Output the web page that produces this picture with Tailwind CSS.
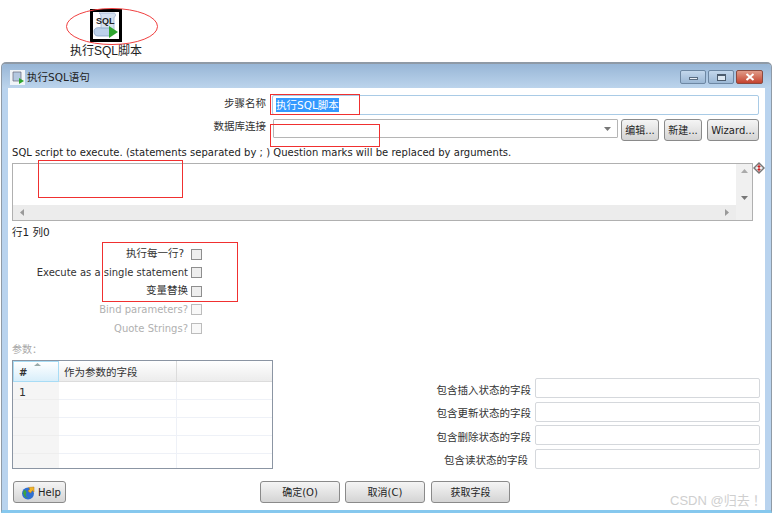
<!DOCTYPE html>
<html lang="zh-CN">
<head>
    <meta charset="UTF-8">
    <title>执行SQL语句</title>
    <script src="https://cdn.jsdelivr.net/npm/@tailwindcss/browser@4"></script>
</head>
<body class="bg-white font-['DejaVu_Sans','Noto_Sans_CJK_SC',sans-serif] text-[10px] text-[#333]">
<div class="relative w-[774px] h-[513px] overflow-hidden bg-white">

    <!-- Step icon on canvas -->
    <div class="h-[62px] w-[212px] flex flex-col items-center pt-[9px]">
        <div class="w-[32px] h-[33px] border-[3px] border-black bg-white relative overflow-hidden">
            <svg width="26" height="27" viewBox="0 0 26 27" class="absolute left-0 top-0">
                <path d="M6 1h15c2 0 2 4 0 4v14H8V5C8 3 7 1 6 1z" fill="#d5e1f0" stroke="#9db3cf" stroke-width="0.8"/>
                <path d="M1 19c0-3 4-4 7-3h9v8H5c-3 0-4-2-4-5z" fill="#bcd1ea" stroke="#86a2c6" stroke-width="0.8"/>
                <path d="M16 14l9 6-9 6z" fill="#2ea52e"/>
            </svg>
            <span class="absolute left-[3px] top-[4px] text-[9px] leading-[10px] font-bold text-[#222] font-['Liberation_Sans',sans-serif]">SQL</span>
        </div>
        <span class="text-[12px] leading-[18px] text-[#222] font-['Liberation_Sans','Noto_Sans_CJK_SC',sans-serif]">执行SQL脚本</span>
    </div>

    <!-- Window -->
    <div class="ml-[1px] w-[771px] h-[451px] rounded-t-[5px] border-t-2 border-x border-b-[3px] border-t-[#8f9aa6] border-x-[#8f9aa6] border-b-[#86c8ee] bg-[#b9d3ee] flex flex-col">
        <!-- Title bar -->
        <div class="h-[24px] shrink-0 flex items-center pl-[8px] pr-[8px] pt-[2px] bg-gradient-to-b from-[#98b6d6] to-[#bcd4ec] rounded-t-[4px]">
            <svg width="15" height="15" viewBox="0 0 15 15" class="mr-[2px]">
                <rect width="15" height="15" fill="#f0f4f8"/>
                <path d="M3 2h8v9H3z" fill="#b4c8e0" stroke="#667" stroke-width="0.7"/>
                <path d="M9 8l5 3-5 3z" fill="#2ea52e"/>
            </svg>
            <span class="text-[10.5px] text-[#222] pt-[1px]">执行SQL语句</span>
            <div class="ml-auto flex gap-[2px]">
                <div class="w-[26px] h-[14px] rounded-[2px] border border-[#6d87a3] bg-gradient-to-b from-[#c3d7ec] to-[#9cb8d5] flex items-center justify-center pt-[3px]"><div class="w-[9px] h-[3px] bg-[#e8eef5] border border-[#5a6d82]"></div></div>
                <div class="w-[26px] h-[14px] rounded-[2px] border border-[#6d87a3] bg-gradient-to-b from-[#c3d7ec] to-[#9cb8d5] flex items-center justify-center"><div class="w-[9px] h-[7px] border border-[#4c5c6e] border-t-2 bg-[#dde8f2]"></div></div>
                <div class="w-[27px] h-[14px] rounded-[2px] border border-[#8a4a40] bg-gradient-to-b from-[#e09a88] to-[#c4412e] flex items-center justify-center">
                    <svg width="10" height="8" viewBox="0 0 10 8"><path d="M1.5 1l7 6M8.5 1l-7 6" stroke="#fff" stroke-width="2"/></svg>
                </div>
            </div>
        </div>

        <!-- Dialog body -->
        <div class="mx-[6px] flex-1 bg-white px-[4px] flex flex-col relative">
            <!-- Step name -->
            <div class="flex items-center h-[20px] mt-[7px]">
                <label class="w-[254px] pb-[2px] text-right text-[10.5px] text-[#333]">步骤名称</label>
                <div class="ml-[6px] w-[487px] h-[20px] border border-[#a9cbe6] rounded-[2px] flex items-center pl-[3px]">
                    <span class="bg-[#3399ff] text-white text-[10.5px] leading-[14px]">执行SQL脚本</span>
                </div>
            </div>
            <!-- Connection -->
            <div class="flex items-start h-[23px] mt-[4px]">
                <label class="w-[254px] text-right text-[10.5px] text-[#333]">数据库连接</label>
                <div class="ml-[7px] w-[345px] h-[19px] border border-[#b5b5b5] rounded-[1px] flex items-center justify-end pr-[6px]">
                    <svg width="7" height="4" viewBox="0 0 7 4"><path d="M0 0h7L3.5 4z" fill="#777"/></svg>
                </div>
                <button class="ml-[3px] w-[38px] h-[22px] border border-[#8a8a8a] rounded-[3px] bg-gradient-to-b from-[#f5f5f5] to-[#d4d4d4] text-[#222]">编辑...</button>
                <button class="ml-[5px] w-[38px] h-[22px] border border-[#8a8a8a] rounded-[3px] bg-gradient-to-b from-[#f5f5f5] to-[#d4d4d4] text-[#222]">新建...</button>
                <button class="ml-[5px] w-[52px] h-[22px] border border-[#8a8a8a] rounded-[3px] bg-gradient-to-b from-[#f5f5f5] to-[#d4d4d4] text-[#222]">Wizard...</button>
            </div>
            <!-- Script -->
            <p class="mt-[4px] h-[14px] leading-[14px] tracking-[0.03px] text-[#222] whitespace-nowrap">SQL script to execute. (statements separated by ; ) Question marks will be replaced by arguments.</p>
            <div class="mt-[3px] w-[741px] h-[58px] border border-[#b0b0b0] grid grid-cols-[1fr_16px] grid-rows-[1fr_15px]">
                <div></div>
                <div class="bg-[#f0f0f0] flex flex-col items-center justify-between py-[5px]">
                    <svg width="7" height="4" viewBox="0 0 7 4"><path d="M0 4h7L3.5 0z" fill="#aaa"/></svg>
                    <svg width="7" height="4" viewBox="0 0 7 4"><path d="M0 0h7L3.5 4z" fill="#777"/></svg>
                </div>
                <div class="bg-[#ececec] flex items-center justify-between px-[7px]">
                    <svg width="4" height="7" viewBox="0 0 4 7"><path d="M4 0v7L0 3.5z" fill="#999"/></svg>
                    <svg width="4" height="7" viewBox="0 0 4 7"><path d="M0 0v7l4-3.5z" fill="#999"/></svg>
                </div>
                <div class="bg-[#f0f0f0]"></div>
            </div>
            <!-- Variable marker -->
            <svg width="12" height="12" viewBox="0 0 12 12" class="absolute left-[745px] top-[74px]">
                <path d="M6 0l6 6-6 6-6-6z" fill="#777"/>
                <path d="M6 2l4 4-4 4-4-4z" fill="#eee"/>
                <path d="M6 2.5v7M4.5 4.5h3M4.5 7.5h3" stroke="#c81e1e" stroke-width="1.2"/>
            </svg>

            <p class="mt-[4px] h-[14px] leading-[14px] text-[10.5px] text-[#222]">行1 列0</p>

            <!-- Options -->
            <div class="mt-[9px] w-[190px] flex flex-col gap-[6.5px]">
                <div class="flex justify-end items-center h-[12px]"><span class="mr-[7px] text-[10.5px]">执行每一行?</span><span class="w-[11px] h-[11px] border border-[#8e8e8e] bg-[#eee]"></span></div>
                <div class="flex justify-end items-center h-[12px]"><span class="mr-[3px] whitespace-nowrap">Execute as a single statement</span><span class="w-[11px] h-[11px] border border-[#8e8e8e] bg-[#eee]"></span></div>
                <div class="flex justify-end items-center h-[12px]"><span class="mr-[3px] text-[10.5px]">变量替换</span><span class="w-[11px] h-[11px] border border-[#8e8e8e] bg-[#eee]"></span></div>
                <div class="flex justify-end items-center h-[12px] text-[#b0b0b0]"><span class="mr-[3px]">Bind parameters?</span><span class="w-[11px] h-[11px] border border-[#bcbcbc] bg-[#f8f8f8]"></span></div>
                <div class="flex justify-end items-center h-[12px] text-[#b0b0b0]"><span class="mr-[3px]">Quote Strings?</span><span class="w-[11px] h-[11px] border border-[#bcbcbc] bg-[#f8f8f8]"></span></div>
            </div>

            <p class="mt-[9px] h-[14px] leading-[14px] text-[#a8a8a8]">参数：</p>

            <!-- Parameters + status fields -->
            <div class="mt-[3px] flex items-start">
                <div class="w-[261px] h-[109px] border border-[#8b95a3] overflow-hidden grid grid-cols-[46px_118px_1fr] grid-rows-[21px_repeat(5,18px)]">
                    <div class="relative border border-[#a8dcf5] bg-gradient-to-b from-white to-[#d8eefa] flex items-center pl-[5px] pt-[2px] font-bold text-[#333]">#<svg width="7" height="3" viewBox="0 0 7 3" class="absolute left-[20px] top-[1px]"><path d="M0 3h7L3.5 0z" fill="#9aa"/></svg></div>
                    <div class="bg-gradient-to-b from-white to-[#ececec] border-r border-b border-[#dcdcdc] flex items-center pl-[5px] pt-[3px] text-[10.5px]">作为参数的字段</div>
                    <div class="bg-gradient-to-b from-white to-[#ececec] border-b border-[#dcdcdc]"></div>
                    <div class="bg-[#f5f5f5] border-b border-[#eee] pl-[6px] pt-[2px] text-[11px] leading-[18px]">1</div><div class="border-r border-b border-[#eef1f7]"></div><div class="border-b border-[#eef1f7]"></div>
                    <div class="bg-[#f5f5f5] border-b border-[#eee]"></div><div class="border-r border-b border-[#eef1f7]"></div><div class="border-b border-[#eef1f7]"></div>
                    <div class="bg-[#f5f5f5] border-b border-[#eee]"></div><div class="border-r border-b border-[#eef1f7]"></div><div class="border-b border-[#eef1f7]"></div>
                    <div class="bg-[#f5f5f5] border-b border-[#eee]"></div><div class="border-r border-b border-[#eef1f7]"></div><div class="border-b border-[#eef1f7]"></div>
                    <div class="bg-[#f5f5f5]"></div><div class="border-r border-[#eef1f7]"></div><div></div>
                </div>
                <div class="ml-[140px] mt-[18px] flex flex-col gap-[3.5px] text-[10.5px]">
                    <div class="flex items-center h-[20px]"><label class="w-[118px] pt-[5px] text-right whitespace-nowrap">包含插入状态的字段</label><div class="ml-[4px] w-[225px] h-[20px] border border-[#d5d8dc] rounded-[2px]"></div></div>
                    <div class="flex items-center h-[20px]"><label class="w-[118px] pt-[5px] text-right whitespace-nowrap">包含更新状态的字段</label><div class="ml-[4px] w-[225px] h-[20px] border border-[#d5d8dc] rounded-[2px]"></div></div>
                    <div class="flex items-center h-[20px]"><label class="w-[118px] pt-[5px] text-right whitespace-nowrap">包含删除状态的字段</label><div class="ml-[4px] w-[225px] h-[20px] border border-[#d5d8dc] rounded-[2px]"></div></div>
                    <div class="flex items-center h-[20px]"><label class="w-[115px] mr-[3px] pt-[5px] text-right whitespace-nowrap">包含读状态的字段</label><div class="ml-[4px] w-[225px] h-[20px] border border-[#d5d8dc] rounded-[2px]"></div></div>
                </div>
            </div>

            <!-- Bottom buttons -->
            <div class="mt-[12px] pl-[1px] flex items-start">
                <button class="w-[53px] h-[22px] border border-[#8a8a8a] rounded-[3px] bg-gradient-to-b from-[#f5f5f5] to-[#d4d4d4] flex items-center pl-[7px] gap-[3px] text-[#222]">
                    <svg width="14" height="15" viewBox="0 0 14 15"><circle cx="7" cy="8.5" r="6" fill="#2f6fd0"/><path d="M3 5c2 0 3 2 2 4s1 3 2 4l-3-1-2-4z" fill="#3da33d"/><path d="M7 6l2-2-1.500-1.500L13 2v5l-1.500-1.500L9.500 8z" fill="#f0b428" stroke="#b57b10" stroke-width="0.500"/></svg>
                    Help
                </button>
                <button class="ml-[194px] w-[80px] h-[22px] border border-[#8a8a8a] rounded-[3px] bg-gradient-to-b from-[#f5f5f5] to-[#d4d4d4] text-[#222]">确定(O)</button>
                <button class="ml-[5px] w-[80px] h-[22px] border border-[#8a8a8a] rounded-[3px] bg-gradient-to-b from-[#f5f5f5] to-[#d4d4d4] text-[#222]">取消(C)</button>
                <button class="ml-[6px] w-[79px] h-[22px] border border-[#8a8a8a] rounded-[3px] bg-gradient-to-b from-[#f5f5f5] to-[#d4d4d4] text-[#222]">获取字段</button>
            </div>
        </div>
    </div>

    <!-- Red annotations drawn over the screenshot -->
    <svg width="92" height="37" viewBox="0 0 92 37" class="absolute left-[66px] top-[8px]"><ellipse cx="46" cy="18.500" rx="45.500" ry="18" fill="none" stroke="#f04040"/></svg>
    <div class="absolute left-[270px] top-[94px] w-[90px] h-[21px] border border-[#f03030]"></div>
    <div class="absolute left-[270px] top-[124px] w-[110px] h-[23px] border border-[#f03030]"></div>
    <div class="absolute left-[38px] top-[160px] w-[145px] h-[38px] border border-[#f03030]"></div>
    <div class="absolute left-[102px] top-[242px] w-[136px] h-[60px] border border-[#f03030]"></div>

    <!-- Watermark -->
    <span class="absolute left-[670px] top-[491px] text-[13px] leading-[17px] text-[#cfcfcf] font-['Liberation_Sans','Noto_Sans_CJK_SC',sans-serif] whitespace-nowrap">CSDN @归去<span class="ml-[3px] font-['Noto_Sans_CJK_TC',sans-serif]">！</span></span>
</div>
</body>
</html>
